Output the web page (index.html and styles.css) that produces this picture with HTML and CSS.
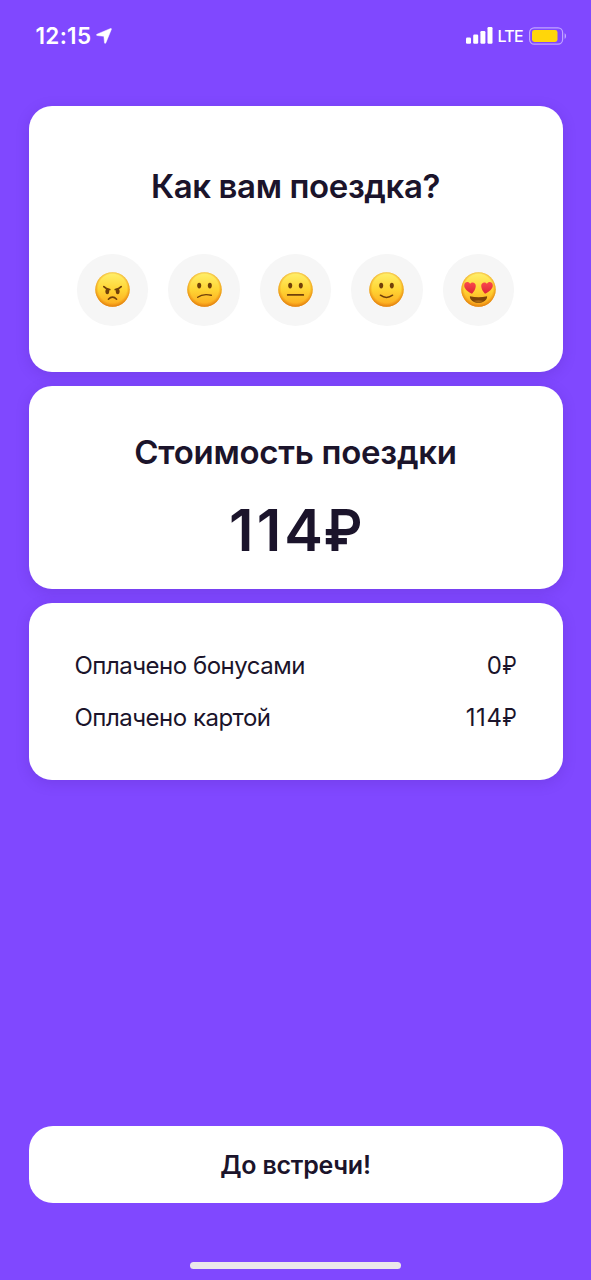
FILE: index.html
```html
<!DOCTYPE html>
<html lang="ru">
<head>
<meta charset="utf-8">
<title>Как вам поездка?</title>
<link rel="stylesheet" href="styles.css">
</head>
<body>
<svg class="defs" width="0" height="0" aria-hidden="true">
  <defs>
    <linearGradient id="face" x1="0" y1="0" x2="0" y2="1">
      <stop offset="0" stop-color="#fff06c"/>
      <stop offset=".5" stop-color="#ffd534"/>
      <stop offset="1" stop-color="#fca81e"/>
    </linearGradient>
    <radialGradient id="rim" cx=".5" cy=".47" r=".53">
      <stop offset=".78" stop-color="#ee8a12" stop-opacity="0"/>
      <stop offset="1" stop-color="#dc7a0c" stop-opacity=".9"/>
    </radialGradient>
    <linearGradient id="heart" x1="0" y1="0" x2="0" y2="1">
      <stop offset="0" stop-color="#fb4a4c"/>
      <stop offset="1" stop-color="#dc2337"/>
    </linearGradient>
    <g id="head">
      <circle cx="17.5" cy="17.5" r="17.2" fill="url(#face)"/>
      <circle cx="17.5" cy="17.5" r="17.2" fill="url(#rim)"/>
    </g>
    <g id="eyes" fill="#71400a">
      <ellipse cx="12.2" cy="13.6" rx="2" ry="2.8"/>
      <ellipse cx="22.8" cy="13.6" rx="2" ry="2.8"/>
    </g>
  </defs>
</svg>
<div class="screen">
  <header class="status">
    <div class="status-left">
      <span class="time">12:15</span>
      <svg class="location" width="16" height="16" viewBox="0 0 16 16"><path d="M14.6.5c.6-.2 1 .2.8.8L9.8 14.9c-.3.7-1.2.6-1.3-.1L7.900 8.300 1.100 7.500C.4 7.400.3 6.500 1 6.200z" fill="#fff" stroke="#fff" stroke-width=".5"/></svg>
    </div>
    <div class="status-right">
      <svg class="signal" width="27" height="17" viewBox="0 0 27 17" fill="#fff">
        <rect x="0" y="10.500" width="5" height="6.200" rx="1.200"/>
        <rect x="7.200" y="7.500" width="5" height="9.200" rx="1.200"/>
        <rect x="14.400" y="4" width="5" height="12.700" rx="1.200"/>
        <rect x="21.500" y="0" width="5" height="16.700" rx="1.200"/>
      </svg>
      <span class="network">LTE</span>
      <svg class="battery" width="38" height="18" viewBox="0 0 38 18">
        <rect x=".6" y=".8" width="33" height="16.400" rx="4.600" fill="none" stroke="#fff" stroke-opacity=".5" stroke-width="1.200"/>
        <rect x="3" y="3" width="25.500" height="12" rx="2.400" fill="#ffd60a"/>
        <path d="M35.600 6.200c1.900.8 1.900 4.800 0 5.600z" fill="#fff" fill-opacity=".55"/>
      </svg>
    </div>
  </header>

  <main class="cards">
    <section class="card rating">
      <h1 class="title rating-title">Как вам поездка?</h1>
      <div class="faces">
        <button class="face" aria-label="Ужасно"><svg width="35" height="35" viewBox="0 0 35 35"><use href="#head"/><g fill="#71400a"><ellipse cx="12.300" cy="19.300" rx="1.900" ry="2.900"/><ellipse cx="22.700" cy="19.300" rx="1.900" ry="2.900"/></g><path d="M8.800 14.600q2.300 2.500 6 3M26.200 14.600q-2.300 2.500-6 3M13.400 27.200q4.100-4.200 8.200 0" fill="none" stroke="#71400a" stroke-width="1.600" stroke-linecap="round"/></svg></button>
        <button class="face" aria-label="Плохо"><svg width="35" height="35" viewBox="0 0 35 35"><use href="#head"/><use href="#eyes"/><path d="M10.700 25.300q5.200-4 13.600-2" fill="none" stroke="#71400a" stroke-width="1.400" stroke-linecap="round"/></svg></button>
        <button class="face" aria-label="Нормально"><svg width="35" height="35" viewBox="0 0 35 35"><use href="#head"/><use href="#eyes"/><path d="M9.700 22.900h15.600" stroke="#71400a" stroke-width="1.700" stroke-linecap="round"/></svg></button>
        <button class="face" aria-label="Хорошо"><svg width="35" height="35" viewBox="0 0 35 35"><use href="#head"/><use href="#eyes"/><path d="M11.400 23.200q6.100 4.600 12.200 0" fill="none" stroke="#71400a" stroke-width="1.500" stroke-linecap="round"/></svg></button>
        <button class="face" aria-label="Отлично"><svg width="35" height="35" viewBox="0 0 35 35"><use href="#head"/><path d="M8.900 24.200q8.600 2 17.200 0c.3 4-4 6.600-8.600 6.600s-8.900-2.600-8.600-6.600z" fill="#7b4409"/><path d="M12 29.100q5.500 2.300 11 0-5.500-1.600-11 0z" fill="#ad690f"/><g fill="url(#heart)"><path d="M11 21.800C6.500 19.500 3 16.500 3.200 13.200c.2-3.600 4.300-4.300 5.900-1.500 2-2.500 5.800-1.100 5.700 2.200-.1 2.800-1.800 5.600-3.800 7.900z"/><path d="M24 21.800c4.500-2.300 8-5.300 7.800-8.600-.2-3.600-4.300-4.300-5.900-1.500-2-2.500-5.800-1.100-5.700 2.200.1 2.800 1.800 5.600 3.800 7.900z"/></g></svg></button>
      </div>
    </section>

    <section class="card cost">
      <h2 class="title cost-title">Стоимость поездки</h2>
      <div class="price">114<span class="ruble">₽</span></div>
    </section>

    <section class="card payments">
      <div class="row"><span class="label">Оплачено бонусами</span><span class="sum">0<span class="ruble">₽</span></span></div>
      <div class="row"><span class="label">Оплачено картой</span><span class="sum">114<span class="ruble">₽</span></span></div>
    </section>
  </main>

  <footer class="footer">
    <button class="done">До встречи!</button>
    <div class="home-bar"></div>
  </footer>
</div>
</body>
</html>
```
FILE: styles.css
```css
* { box-sizing: border-box; margin: 0; }
body {
  font-family: Inter, "Liberation Sans", sans-serif;
  color: #1b142b;
  background: #8048ff;
}
button { border: 0; padding: 0; font: inherit; color: inherit; }
svg { display: block; }
.defs { position: absolute; }
.screen {
  width: 591px;
  height: 1280px;
  display: flex;
  flex-direction: column;
  background: #8048ff;
  overflow: hidden;
}
.status {
  height: 106px;
  flex: none;
  display: flex;
  justify-content: space-between;
  align-items: flex-start;
  padding: 20px 24px 0 35.5px;
  color: #fff;
}
.status-left, .status-right { display: flex; align-items: center; height: 31px; }
.time { font-size: 22.5px; font-weight: 600; letter-spacing: 0.3px; }
.location { margin-left: 5px; }
.network { font-size: 16px; font-weight: 500; letter-spacing: -0.7px; margin-left: 4.5px; padding-top: 1px; }
.battery { margin-left: 6px; }
.cards {
  display: flex;
  flex-direction: column;
  gap: 14.5px;
  padding: 0 28.5px;
}
.card {
  background: #fff;
  border-radius: 23px;
  box-shadow: 0 3px 14px rgba(60, 20, 140, 0.18);
}
.title { font-size: 33px; line-height: 40px; font-weight: 600; text-align: center; white-space: nowrap; }
.rating-title { letter-spacing: -0.4px; }
.cost-title { letter-spacing: -0.27px; }
.rating { height: 265.5px; padding-top: 60px; }
.faces { display: flex; justify-content: center; gap: 20px; margin-top: 48.3px; }
.face {
  width: 71.4px;
  height: 71.4px;
  border-radius: 50%;
  background: #f6f6f6;
  display: flex;
  align-items: center;
  justify-content: center;
}
.cost { height: 202.5px; padding-top: 46px; }
.price { margin-top: 23px; font-size: 58px; line-height: 70px; font-weight: 600; text-align: center; letter-spacing: 3.2px; }
.ruble { display: inline-block; transform: scaleX(0.92); transform-origin: right; letter-spacing: 0; margin-left: -0.11em; }
.payments {
  height: 177px;
  padding: 48px 45.5px 0 46px;
  display: flex;
  flex-direction: column;
  gap: 21.5px;
}
.row { display: flex; justify-content: space-between; font-size: 24px; line-height: 30px; white-space: nowrap; }
.label { letter-spacing: -0.5px; }
.sum { letter-spacing: 0.6px; }
.sum .ruble { transform: scaleX(0.86); margin-left: -0.1em; }
.footer {
  margin-top: auto;
  padding: 0 28.5px 11px;
  display: flex;
  flex-direction: column;
  align-items: center;
}
.done {
  width: 100%;
  height: 77px;
  border-radius: 24px;
  background: #fff;
  font-size: 25px;
  font-weight: 600;
  letter-spacing: -0.25px;
}
.home-bar { width: 211px; height: 7px; margin-top: 59px; border-radius: 4px; background: #ebe8ea; }
```
